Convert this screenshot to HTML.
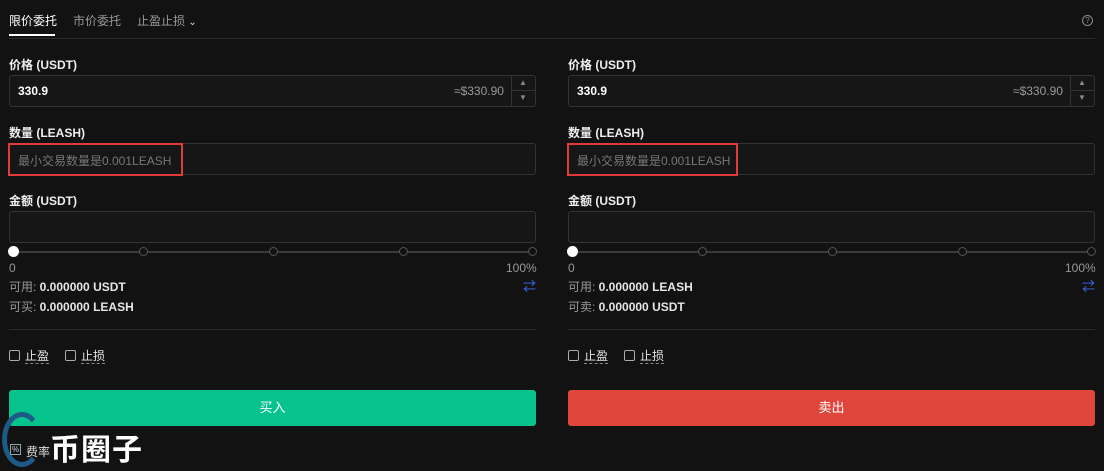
<!DOCTYPE html>
<html><head><meta charset="utf-8"><style>
*{box-sizing:border-box;margin:0;padding:0}
body{width:1104px;height:471px;background:#121212;color:#e6e6e6;font-family:"Liberation Sans","Noto Sans CJK SC",sans-serif;font-size:12px;position:relative;overflow:hidden}
.a{position:absolute}
.tab{top:12px;font-size:12px}
.lbl{font-size:12px;color:#eee;font-weight:bold}
.inp{border:1px solid #333;border-radius:3px;background:#161616;height:31px}
.sl{height:2px;background:#3a3a3a}
.dot{width:9px;height:9px;border:1px solid #555;border-radius:50%;background:#121212;top:-4px}
.cb{width:11px;height:11px;border:1px solid #aaa;border-radius:2px}
.u{border-bottom:1px dashed #888;line-height:14px}
.g{color:#999;font-weight:normal}
</style></head><body>
<div class="a tab" style="left:9px;color:#fff">限价委托</div>
<div class="a" style="left:9px;top:34px;width:46px;height:2px;background:#fff"></div>
<div class="a tab g" style="left:73px">市价委托</div>
<div class="a tab g" style="left:137px">止盈止损 <span style="color:#ddd;font-size:10px">&#8964;</span></div>
<div class="a" style="left:1082px;top:15px;width:11px;height:11px;border:1px solid #888;border-radius:50%;font-size:8px;color:#888;text-align:center;line-height:9px">?</div>
<div class="a" style="left:9px;top:38px;width:1086px;height:1px;background:#2a2a2a"></div>

<div id="L"></div>
<script>
function col(x,sell){
 const w=527;let h='';
 h+=`<div class="a lbl" style="left:${x}px;top:56px">价格 (USDT)</div>
 <div class="a inp" style="left:${x}px;top:75px;width:${w}px;height:32px"></div>
 <div class="a" style="left:${x+9}px;top:84px;color:#fff;font-weight:bold">330.9</div>
 <div class="a g" style="left:${x+445}px;top:84px">≈$330.90</div>
 <div class="a" style="left:${x+502}px;top:76px;width:1px;height:30px;background:#333"></div>
 <div class="a" style="left:${x+503}px;top:90px;width:23px;height:1px;background:#333"></div>
 <div class="a" style="left:${x+510}px;top:78px;font-size:8px;color:#888">▲</div>
 <div class="a" style="left:${x+510}px;top:93px;font-size:8px;color:#888">▼</div>
 <div class="a lbl" style="left:${x}px;top:124px">数量 (LEASH)</div>
 <div class="a inp" style="left:${x}px;top:143px;width:${w}px;height:32px"></div>
 <div class="a" style="left:${x-1}px;top:143px;width:${sell?171:175}px;height:33px;border:2px solid #e03a3a"></div>
 <div class="a" style="left:${x+9}px;top:152px;color:#777">最小交易数量是0.001LEASH</div>
 <div class="a lbl" style="left:${x}px;top:192px">金额 (USDT)</div>
 <div class="a inp" style="left:${x}px;top:211px;width:${w}px;height:32px"></div>
 <div class="a sl" style="left:${x+3}px;top:251px;width:${w-3}px"></div>`;
 for(let i=0;i<5;i++){h+=`<div class="a dot" style="left:${x+130*i+(i==4?-1:0)}px;top:247px"></div>`}
 h+=`<div class="a" style="left:${x-1}px;top:246px;width:11px;height:11px;border-radius:50%;background:#fff"></div>
 <div class="a g" style="left:${x}px;top:261px">0</div>
 <div class="a g" style="left:${x+497}px;top:261px">100%</div>
 <div class="a" style="left:${x}px;top:278px;font-weight:bold"><span class="g">可用:</span> ${sell?'0.000000 LEASH':'0.000000 USDT'}</div>
 <div class="a" style="left:${x}px;top:298px;font-weight:bold"><span class="g">${sell?'可卖':'可买'}:</span> ${sell?'0.000000 USDT':'0.000000 LEASH'}</div>
 <div class="a" style="left:${x+514}px;top:276px;color:#3b6cf0;font-size:13px">⇄</div>
 <div class="a" style="left:${x}px;top:329px;width:${w}px;height:1px;background:#2a2a2a"></div>
 <div class="a cb" style="left:${x}px;top:350px"></div><div class="a u" style="left:${x+16}px;top:349px">止盈</div>
 <div class="a cb" style="left:${x+56}px;top:350px"></div><div class="a u" style="left:${x+72}px;top:349px">止损</div>
 <div class="a" style="left:${x}px;top:390px;width:${w}px;height:36px;border-radius:3px;background:${sell?'#e0453c':'#06c28d'};color:#fff;text-align:center;line-height:36px;font-size:13px">${sell?'卖出':'买入'}</div>`;
 return h;
}
document.getElementById('L').innerHTML=col(9,false)+col(568,true);
</script>
<div class="a" style="left:2px;top:412px;width:40px;height:55px;border-radius:50%;border:5px solid #1d5a86;border-right-color:transparent"></div>
<div class="a" style="left:10px;top:444px;width:11px;height:11px;border:1px solid #8aa;font-size:8px;line-height:9px;text-align:center;color:#ccd">%</div>
<div class="a" style="left:26px;top:443px;font-size:12px;color:#ddd">费率</div>
<div class="a" style="left:50px;top:425px;font-size:30px;font-weight:bold;color:#fff;letter-spacing:1px">币圈子</div>
</body></html>
